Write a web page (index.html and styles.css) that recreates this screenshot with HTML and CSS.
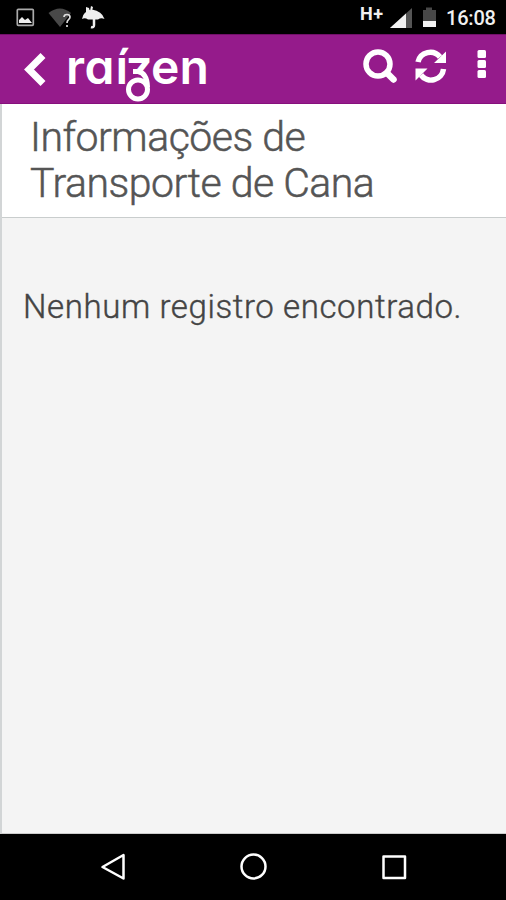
FILE: index.html
```
<!DOCTYPE html>
<html lang="pt-BR">
<head>
<meta charset="utf-8">
<title>Informações de Transporte de Cana</title>
<link rel="stylesheet" href="styles.css">
</head>
<body>
<div class="status">
  <svg class="status-left" width="120" height="34" viewBox="0 0 120 34">
    <rect x="17.3" y="9.3" width="16" height="16" rx="1" fill="none" stroke="#aaa" stroke-width="1.7"/>
    <path d="M19 23v-3l3-3 3 3 3-2 4 5z" fill="#eee"/>
    <path d="M48.500 13Q60 4 71 13L60 27Z" fill="#484848"/>
    <path d="M64 17q0-2.500 3-2.500t3 2.500q0 1.500-1.500 2.700T67 23M67 25v2" fill="none" stroke="#ddd" stroke-width="1.700"/>
    <path d="M82 19Q83 11 92 9.500Q102 11 104.500 19Q101 17.500 98 19.500H88Q85 17.500 82 19ZM86 7l3 1 1 4-4 1zM91 6l2 1-1 4h-2z" fill="#eee"/>
    <path d="M94 17v8q0 3-3 2" fill="none" stroke="#eee" stroke-width="2.500"/>
  </svg>
  <div class="status-right">
    <span class="network">H+</span>
    <svg width="60" height="34" viewBox="0 0 60 34">
      <path d="M4 28L26 8V28Z" fill="#555"/><path d="M4 28L20 13.500V28Z" fill="#f2f2f2"/>
      <path d="M37 10h3V7.500h6V10h4V27H37Z" fill="#484848"/><path d="M37 21h13v6H37z" fill="#f2f2f2"/>
    </svg>
    <span class="clock">16:08</span>
  </div>
</div>
<header class="appbar">
  <svg class="back" width="62" height="70" viewBox="0 0 62 70"><path d="M43 21.500L29 35.500L43 49.500" fill="none" stroke="#fff" stroke-width="7"/></svg>
  <svg class="logo" width="160" height="70" viewBox="62 34 160 70">
    <clipPath id="z-top"><path d="M120 50H155V72H120Z"/></clipPath>
    <text x="66 84.500 115.500" y="84">raí</text>
    <text x="125.500" y="84" clip-path="url(#z-top)">z</text>
    <text x="151 179.500" y="84">en</text>
    <path d="M133 71.500H138Q147 73 147.500 87"/>
    <circle cx="138" cy="89.500" r="9.500"/>
  </svg>
  <svg class="actions" width="156" height="70" viewBox="350 34 156 70">
    <g fill="none" stroke="#fff">
      <circle cx="378" cy="64" r="12" stroke-width="5.500"/><path d="M387 73L393.500 79.500" stroke-width="6.500" stroke-linecap="round"/>
      <path d="M418 62A12.500 12.500 0 0 1 440 57M443.500 69A12.500 12.500 0 0 1 421 75" stroke-width="5.500"/>
    </g>
    <path d="M446 51.500V63H434ZM415.500 80.500V68.500H427.500Z" fill="#fff"/>
    <g fill="#fff"><rect x="477.500" y="50" width="8.500" height="8" rx="1.500"/><rect x="477.500" y="60" width="8.500" height="8" rx="1.500"/><rect x="477.500" y="70" width="8.500" height="8" rx="1.500"/></g>
  </svg>
</header>
<main class="page">
  <h1 class="title">Informações de<br>Transporte de Cana</h1>
  <p class="message">Nenhum registro encontrado.</p>
</main>
<nav class="navbar">
  <svg width="506" height="66" viewBox="0 834 506 66" fill="none" stroke="#fff" stroke-width="2.500" stroke-linejoin="round">
    <path d="M102.500 867L123.500 855V878.500Z"/><circle cx="253.500" cy="866.500" r="12"/><rect x="383.500" y="856.500" width="21.500" height="21.500"/>
  </svg>
</nav>
</body>
</html>
```
FILE: styles.css
```
* { box-sizing: border-box; }
body {
  margin: 0;
  width: 506px;
  height: 900px;
  overflow: hidden;
  display: flex;
  flex-direction: column;
  font-family: Roboto, sans-serif;
}
svg { display: block; flex: none; }
.status {
  height: 34px;
  display: flex;
  justify-content: space-between;
  background: #000;
  color: #f0f0f0;
}
.status-right { display: flex; width: 146px; }
.network {
  width: 26px;
  font-size: 18px;
  line-height: 27px;
  font-weight: 700;
  letter-spacing: 0.5px;
}
.clock {
  font-size: 20px;
  line-height: 37px;
  font-weight: 500;
  letter-spacing: -0.2px;
}
.appbar {
  height: 70px;
  display: flex;
  background: #951b8b;
  border-top: 1px solid #721069;
  border-bottom: 1px solid #86107c;
}
.appbar svg { margin-top: -1px; }
.actions { margin-left: auto; }
.logo text {
  font: 600 48px Inter, sans-serif;
  font-feature-settings: "cv11";
  fill: #fff;
}
.logo > path,
.logo circle { fill: none; stroke: #fff; stroke-width: 5px; }
.page {
  flex: 1;
  border-left: 2px solid #d2d5d6;
  border-bottom: 1px solid #ccc;
  background: #f4f4f4;
}
.title {
  margin: 0;
  height: 114px;
  padding: 10px 0 0 28px;
  background: #fff;
  border-bottom: 1px solid #c9cdcd;
  color: #555;
  font-size: 41px;
  line-height: 46px;
  font-weight: 300;
  letter-spacing: -0.5px;
  -webkit-text-stroke: 0.5px #555;
}
.message {
  margin: 68px 0 0 21px;
  color: #444;
  font-size: 33px;
  line-height: 42px;
  font-weight: 300;
  letter-spacing: 0.6px;
  white-space: nowrap;
  -webkit-text-stroke: 0.4px #444;
}
.navbar { height: 66px; background: #000; }
```
